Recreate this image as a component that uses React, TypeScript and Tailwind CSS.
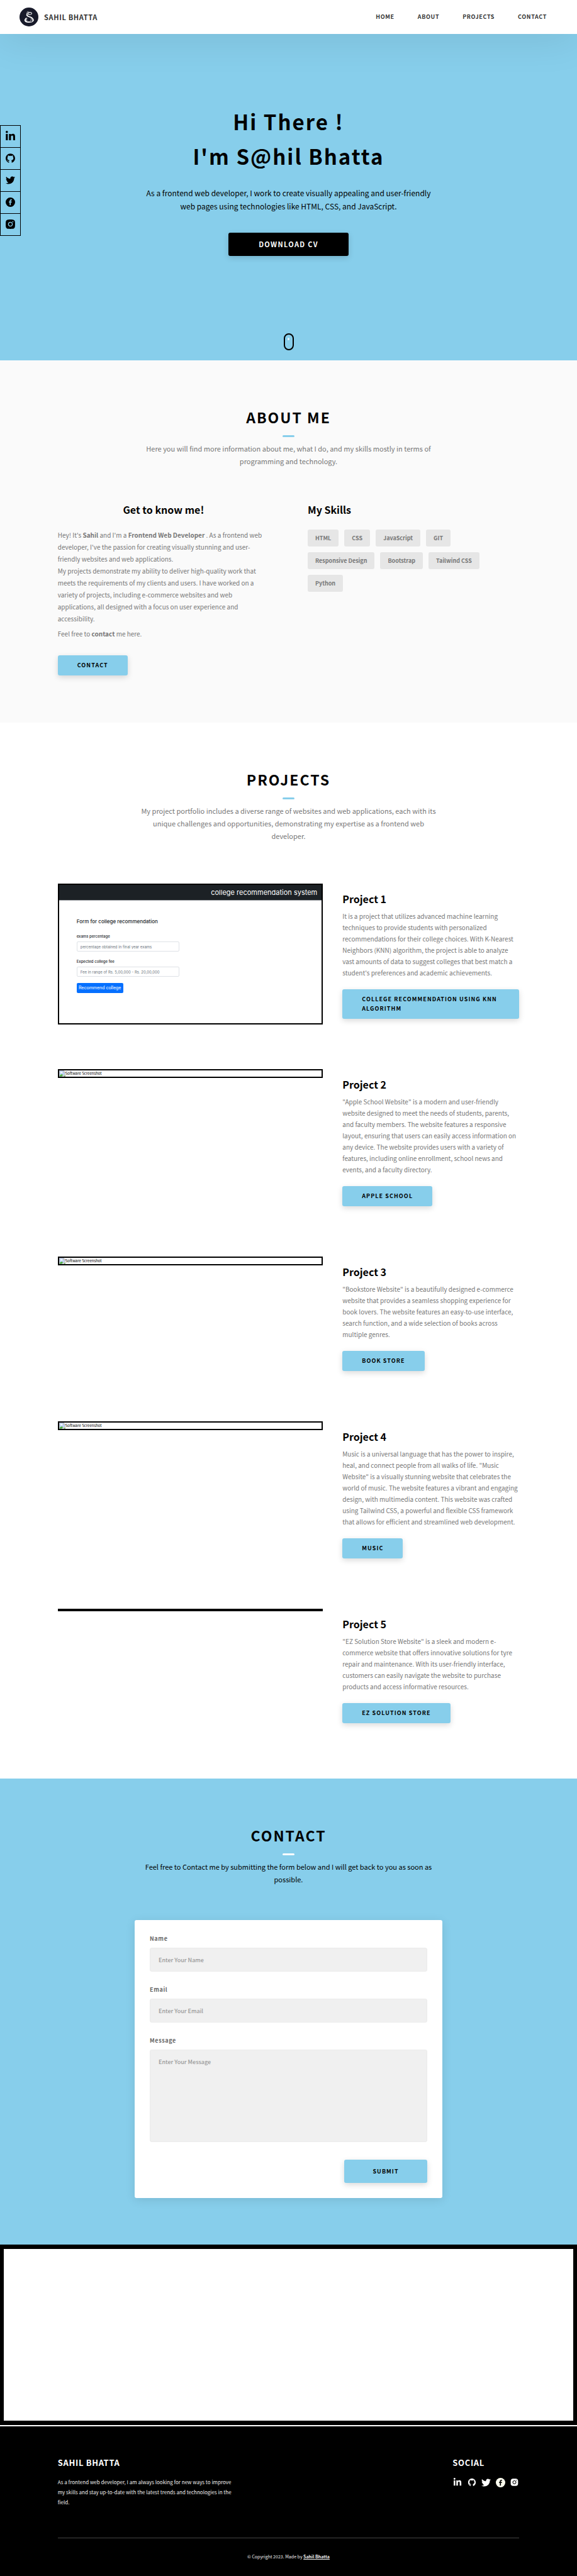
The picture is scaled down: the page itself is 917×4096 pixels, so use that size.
import type { ReactNode } from "react";
import { FaLinkedinIn, FaTwitter } from "react-icons/fa";
import { AiFillGithub, AiFillInstagram } from "react-icons/ai";

function Logo() {
  return (
    <svg viewBox="0 0 144 144" className="size-[30px]" role="img" aria-label="Sahil Bhatta logo">
      <circle cx="72" cy="72" r="72" fill="#181a2a" />
      <g fill="none" stroke="#fff" strokeLinecap="round">
        <path d="M62 30 C54 40 54 50 66 54" strokeWidth="3" />
        <path d="M68 31 C62 40 62 48 72 52" strokeWidth="3" />
        <path d="M66 42 C78 32 96 38 93 47 C90 56 70 56 66 48" strokeWidth="5" />
        <path d="M58 44 C48 62 60 68 76 72 C96 77 108 84 106 98" strokeWidth="5" />
        <path d="M58 56 C58 66 70 68 82 72 C98 78 104 88 100 100" strokeWidth="7" />
        <path d="M52 80 C34 94 38 110 62 112 C88 114 104 112 106 96" strokeWidth="6" />
        <path d="M58 82 C50 92 52 106 68 108 C86 110 92 98 88 84" strokeWidth="4" />
        <path d="M48 86 C42 94 44 104 54 108" strokeWidth="7" />
      </g>
    </svg>
  );
}

function FacebookIcon({ disc, letter }: { disc: string; letter?: string }) {
  const f =
    "M13 19.6V12.9h2.4l.4-2.7H13V8.6c0-.8.4-1.4 1.5-1.4h1.4V4.8c-.3-.1-1.1-.2-2-.2-2.3 0-3.7 1.3-3.7 3.7v1.9H8v2.7h2.2v6.7z";
  return (
    <svg viewBox="0 0 24 24" className="size-[15px]" aria-hidden="true">
      {letter ? (
        <>
          <circle cx="12" cy="12" r="12" fill={disc} />
          <path d={f} fill={letter} />
        </>
      ) : (
        <path fillRule="evenodd" fill={disc} d={"M12 0a12 12 0 1 0 0 24a12 12 0 1 0 0-24z" + f} />
      )}
    </svg>
  );
}

function BrokenImage() {
  return (
    <svg viewBox="0 0 16 16" className="size-[10px] shrink-0" aria-hidden="true">
      <path d="M.5 .5H11L15.5 5V9L8 15.5H.5z" fill="#c3d5f5" stroke="#9a9a9a" />
      <path d="M11 .5V5H15.5z" fill="#fff" stroke="#9a9a9a" />
      <ellipse cx="6" cy="5" rx="2.8" ry="1.6" fill="#fff" />
      <path d="M1 15C2 10.5 6 9 10 11L6.5 15z" fill="#4caf3a" />
      <path d="M11 15.5L15.5 11.5V15.5z" fill="#4caf3a" stroke="#9a9a9a" strokeWidth=".6" />
    </svg>
  );
}

const NAV = ["Home", "About", "Projects", "Contact"];
const SKILLS = ["HTML", "CSS", "JavaScript", "GIT", "Responsive Design", "Bootstrap", "Tailwind CSS", "Python"];

function Button({ href, children }: { href: string; children: ReactNode }) {
  return (
    <a
      href={href}
      className="inline-block rounded-[3px] bg-[#87ceeb] px-[31px] pt-[8px] pb-[9px] text-[9px] leading-[15px] font-bold tracking-[0.12em] text-black uppercase shadow-[0_3px_10px_rgba(0,0,0,0.15)]"
    >
      {children}
    </a>
  );
}

function SectionHead({ title, text, light }: { title: string; text: string; light?: boolean }) {
  return (
    <div className="flex flex-col items-center text-center">
      <h2 className="text-[23px] leading-[26px] font-bold tracking-[2px] text-black uppercase">{title}</h2>
      <span className={light ? "mt-4 h-[3px] w-[19px] rounded-sm bg-white" : "mt-4 h-[3px] w-[19px] rounded-sm bg-[#87ceeb]"} />
      <p className={light ? "mt-2 max-w-[475px] text-[11px] leading-5 text-black" : "mt-2 max-w-[475px] text-[11px] leading-5 text-[#777]"}>
        {text}
      </p>
    </div>
  );
}

function CollegeShot() {
  const field =
    "mt-1 block h-4 w-[163px] rounded-[2px] border border-[#dee2e6] px-[5px] text-[6px] text-[#6c757d] placeholder:text-[#6c757d]";
  return (
    <div className="aspect-[422/224] w-full border-2 border-black bg-white font-['Inter',sans-serif] text-[#212529]">
      <div className="flex h-[25px] items-center justify-end border-b border-[#9a9da1] bg-[#1c2125] pr-[7px] text-[11px] text-white">
        college recommendation system
      </div>
      <div className="px-[28px] pt-[28px]">
        <p className="text-[8px] leading-[10px] font-medium">Form for college recommendation</p>
        <label className="mt-[15px] block text-[6px] leading-2 font-medium" htmlFor="percentage">exams percentage</label>
        <input id="percentage" className={field} placeholder="percentage obtained in final year exams" />
        <label className="mt-3 block text-[6px] leading-2 font-medium" htmlFor="fee">Expected college fee</label>
        <input id="fee" className={field} placeholder="Fee in range of Rs. 5,00,000 - Rs. 20,00,000" />
        <button type="button" className="mt-[10px] block h-4 w-[74px] rounded-[2px] bg-[#0570ff] text-[7px] leading-4 whitespace-nowrap text-white">
          Recommend college
        </button>
      </div>
    </div>
  );
}

function MissingShot() {
  return (
    <div className="flex h-[14px] w-full items-center border-2 border-black text-[6px] leading-[10px] text-black">
      <BrokenImage />
      Software Screenshot
    </div>
  );
}

const PROJECTS = [
  {
    name: "Project 1",
    shot: <CollegeShot />,
    text: "It is a project that utilizes advanced machine learning techniques to provide students with personalized recommendations for their college choices. With K-Nearest Neighbors (KNN) algorithm, the project is able to analyze vast amounts of data to suggest colleges that best match a student's preferences and academic achievements.",
    link: "College Recommendation using KNN Algorithm",
  },
  {
    name: "Project 2",
    shot: <MissingShot />,
    text: "\"Apple School Website\" is a modern and user-friendly website designed to meet the needs of students, parents, and faculty members. The website features a responsive layout, ensuring that users can easily access information on any device. The website provides users with a variety of features, including online enrollment, school news and events, and a faculty directory.",
    link: "Apple School",
  },
  {
    name: "Project 3",
    shot: <MissingShot />,
    text: "\"Bookstore Website\" is a beautifully designed e-commerce website that provides a seamless shopping experience for book lovers. The website features an easy-to-use interface, search function, and a wide selection of books across multiple genres.",
    link: "Book Store",
  },
  {
    name: "Project 4",
    shot: <MissingShot />,
    text: "Music is a universal language that has the power to inspire, heal, and connect people from all walks of life. \"Music Website\" is a visually stunning website that celebrates the world of music. The website features a vibrant and engaging design, with multimedia content. This website was crafted using Tailwind CSS, a powerful and flexible CSS framework that allows for efficient and streamlined web development.",
    link: "Music",
  },
  {
    name: "Project 5",
    shot: <div className="h-1 w-full bg-black" />,
    text: "\"EZ Solution Store Website\" is a sleek and modern e-commerce website that offers innovative solutions for tyre repair and maintenance. With its user-friendly interface, customers can easily navigate the website to purchase products and access informative resources.",
    link: "EZ Solution Store",
  },
];

export default function App() {
  const sideLink = "flex h-[34px] items-center justify-center pb-[2px]";
  const label = "block text-[9px] leading-3 font-bold tracking-[0.07em] text-[#666]";
  const field =
    "mt-2 block w-full rounded-[3px] border border-[#ebebeb] bg-[#f0f0f0] px-[13px] text-[9px] font-medium text-[#333] placeholder:text-[#999]";
  return (
    <div className="bg-white font-['Noto_Sans_CJK_JP','Source_Sans_Pro',sans-serif] text-black">
      <header className="relative z-10 flex h-[54px] items-center justify-between bg-white px-[31px] shadow-[0_6px_64px_rgba(0,0,0,0.1)]">
        <a href="#home" className="flex items-center gap-[9px] text-[11px] leading-4 font-bold tracking-[0.06em] text-[#333] uppercase">
          <Logo />
          <span>Sahil Bhatta</span>
        </a>
        <nav className="flex gap-[3px]">
          {NAV.map((n) => (
            <a key={n} href={"#" + n.toLowerCase()} className="px-[17px] text-[9px] leading-4 font-bold tracking-[0.07em] text-[#333] uppercase">
              {n}
            </a>
          ))}
        </nav>
      </header>

      <section id="home" className="relative flex h-[519px] flex-col items-center bg-[#87ceeb] pt-[112px] text-center">
        <h1 className="text-[33px] leading-[55px] font-bold tracking-[2px]">
          Hi There !<br />
          I'm S@hil Bhatta
        </h1>
        <p className="mt-5 max-w-[470px] text-xs leading-[21px]">
          As a frontend web developer, I work to create visually appealing and user-friendly web pages using technologies like HTML, CSS, and JavaScript.
        </p>
        <a
          href="#cv"
          className="mt-8 rounded-[3px] bg-black px-12 py-[10px] text-[11px] leading-[17px] font-bold tracking-[0.12em] text-white uppercase shadow-[0_3px_10px_rgba(0,0,0,0.15)]"
        >
          Download CV
        </a>
        <ul className="absolute top-[145px] left-0 w-[33px] divide-y divide-black border border-black">
          <li><a href="#linkedin" aria-label="LinkedIn" className={sideLink}><FaLinkedinIn size={17} /></a></li>
          <li><a href="#github" aria-label="GitHub" className={sideLink}><AiFillGithub size={17} /></a></li>
          <li><a href="#twitter" aria-label="Twitter" className={sideLink}><FaTwitter size={15} /></a></li>
          <li><a href="#facebook" aria-label="Facebook" className={sideLink}><FacebookIcon disc="#000" /></a></li>
          <li><a href="#instagram" aria-label="Instagram" className={sideLink}><AiFillInstagram size={19} /></a></li>
        </ul>
        <div className="absolute bottom-4 flex h-[27px] w-4 justify-center rounded-full border-2 border-black pt-[5px]">
          <span className="h-1 w-[3px] rounded-full bg-white/80" />
        </div>
      </section>

      <section id="about" className="bg-[#fafafa] pt-[77px] pb-[75px]">
        <SectionHead
          title="About Me"
          text="Here you will find more information about me, what I do, and my skills mostly in terms of programming and technology."
        />
        <div className="mx-auto mt-[57px] grid w-4/5 grid-cols-2 gap-[61px]">
          <div>
            <h3 className="text-center text-base leading-5 font-bold">Get to know me!</h3>
            <p className="mt-[21px] max-w-[329px] text-[10px] leading-[19px] text-[#777]">
              Hey! It's <strong>Sahil</strong> and I'm a <strong>Frontend Web Developer</strong> . As a frontend web developer, I've the passion for creating visually stunning and user-friendly websites and web applications.
              <br />
              My projects demonstrate my ability to deliver high-quality work that meets the requirements of my clients and users. I have worked on a variety of projects, including e-commerce websites and web applications, all designed with a focus on user experience and accessibility.
            </p>
            <p className="mt-[5px] mb-[25px] text-[10px] leading-[19px] text-[#777]">
              Feel free to <strong>contact</strong> me here.
            </p>
            <Button href="#contact">Contact</Button>
          </div>
          <div>
            <h3 className="text-base leading-5 font-bold">My Skills</h3>
            <ul className="mt-[22px] flex max-w-[320px] flex-wrap gap-[9px]">
              {SKILLS.map((s) => (
                <li key={s} className="rounded-[3px] bg-[#e6e6e6] px-3 py-[6px] text-[9px] leading-[15px] font-semibold text-[#777]">
                  {s}
                </li>
              ))}
            </ul>
          </div>
        </div>
      </section>

      <section id="projects" className="bg-white pt-[77px] pb-[79px]">
        <SectionHead
          title="Projects"
          text="My project portfolio includes a diverse range of websites and web applications, each with its unique challenges and opportunities, demonstrating my expertise as a frontend web developer."
        />
        <div className="mx-auto mt-[66px] flex w-4/5 flex-col gap-[71px]">
          {PROJECTS.map((p) => (
            <article key={p.name} className="grid grid-cols-[3fr_2fr] items-start gap-[31px]">
              {p.shot}
              <div className="flex flex-col items-start pt-[14px] pb-[9px]">
                <h3 className="text-base leading-5 font-bold">{p.name}</h3>
                <p className="mt-[9px] mb-[17px] text-[10px] leading-[18px] text-[#777]">{p.text}</p>
                <Button href="#projects">{p.link}</Button>
              </div>
            </article>
          ))}
        </div>
      </section>

      <section id="contact" className="bg-[#87ceeb] pt-[77px] pb-[74px]">
        <SectionHead
          light
          title="Contact"
          text="Feel free to Contact me by submitting the form below and I will get back to you as soon as possible."
        />
        <form className="mx-auto mt-[55px] flex w-[489px] flex-col rounded-[3px] bg-white p-6 shadow-[0_3px_16px_rgba(0,0,0,0.1)]">
          <label htmlFor="name" className={label}>Name</label>
          <input id="name" placeholder="Enter Your Name" className={field + " h-[38px]"} />
          <label htmlFor="email" className={label + " mt-[23px]"}>Email</label>
          <input id="email" type="email" placeholder="Enter Your Email" className={field + " h-[38px]"} />
          <label htmlFor="message" className={label + " mt-[23px]"}>Message</label>
          <textarea id="message" placeholder="Enter Your Message" className={field + " h-[147px] resize-none pt-[11px] leading-4"} />
          <button
            type="submit"
            className="mt-7 h-[37px] w-[132px] self-end rounded-[3px] bg-[#87ceeb] text-[9px] font-bold tracking-[0.12em] uppercase shadow-[0_3px_10px_rgba(0,0,0,0.15)]"
          >
            Submit
          </button>
        </form>
      </section>

      <div className="h-[287px] border-x-[6px] border-y-[7px] border-black bg-white" />

      <footer className="mt-[2px] bg-black pt-12 pb-[26px] text-white">
        <div className="mx-auto w-4/5">
          <div className="flex justify-between border-b border-[#444] pb-12">
            <div>
              <h4 className="text-[13px] leading-5 font-bold tracking-[0.05em] uppercase">Sahil Bhatta</h4>
              <p className="mt-[13px] max-w-[280px] text-[8px] leading-4 text-[#eee]">
                As a frontend web developer, I am always looking for new ways to improve my skills and stay up-to-date with the latest trends and technologies in the field.
              </p>
            </div>
            <div className="w-[106px]">
              <h4 className="text-[13px] leading-5 font-bold tracking-[0.05em] uppercase">Social</h4>
              <div className="mt-[13px] flex items-center justify-between">
                <a href="#linkedin" aria-label="LinkedIn" className="flex w-[15px] justify-center"><FaLinkedinIn size={14} /></a>
                <a href="#github" aria-label="GitHub" className="flex w-[15px] justify-center"><AiFillGithub size={14} /></a>
                <a href="#twitter" aria-label="Twitter" className="flex w-[15px] justify-center"><FaTwitter size={15} /></a>
                <a href="#facebook" aria-label="Facebook" className="flex w-[15px] justify-center"><FacebookIcon disc="#fffff0" letter="#000" /></a>
                <a href="#instagram" aria-label="Instagram" className="flex w-[15px] justify-center"><AiFillInstagram size={16} /></a>
              </div>
            </div>
          </div>
          <p className="mt-[23px] text-center text-[7px] leading-3 text-[#eee]">
            © Copyright 2023. Made by <a href="#home" className="font-bold underline">Sahil Bhatta</a>
          </p>
        </div>
      </footer>
    </div>
  );
}
